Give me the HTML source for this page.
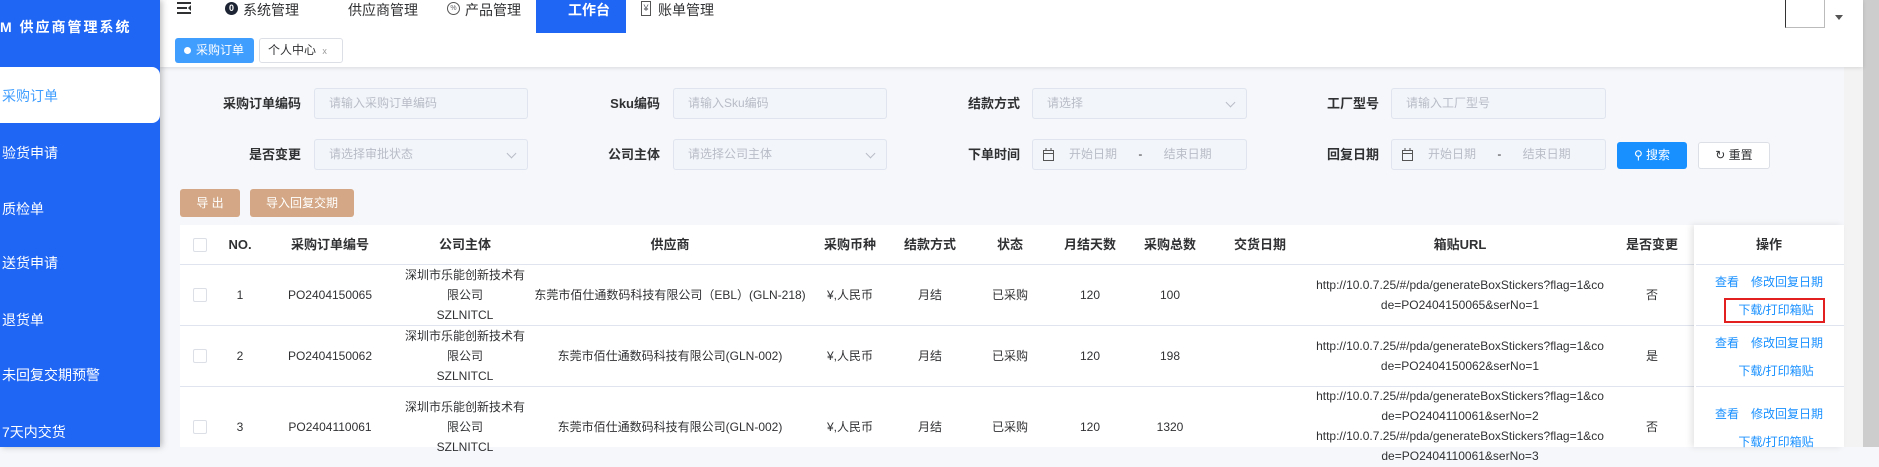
<!DOCTYPE html>
<html><head><meta charset="utf-8">
<style>
*{margin:0;padding:0;box-sizing:border-box}
body{width:1879px;height:447px;overflow:hidden;position:relative;background:#f5f7fa;font-family:"Liberation Sans","Noto Sans CJK SC",sans-serif;font-size:12px;color:#606266}
.a{position:absolute}
.side{left:0;top:0;width:160px;height:447px;background:#1f66f5;color:#fff;box-shadow:2px 0 6px rgba(0,0,0,.25);z-index:3}
.side .it{position:absolute;left:2px;font-size:14px;color:#fff}
.hdr{left:160px;top:0;width:1703px;height:67px;background:#fff;box-shadow:0 1px 4px rgba(0,0,0,.12);z-index:2}
.nav{position:absolute;top:0;height:33px;line-height:20px;font-size:14px;color:#303133;padding-top:0}
.lbl{position:absolute;font-size:13px;font-weight:bold;color:#303133;text-align:right;width:120px;line-height:31px}
.inp{position:absolute;height:31px;background:#f2f5fa;border:1px solid #dfe4ee;border-radius:3px;color:#b8bcc6;font-size:12px;line-height:29px;padding-left:14px}
.chev{position:absolute;right:12px;top:10px;width:7px;height:7px;border-right:1px solid #b8bcc6;border-bottom:1px solid #b8bcc6;transform:rotate(45deg)}
.tbl{left:180px;top:225px;width:1664px;height:222px;background:#fff}
.c{position:absolute;display:flex;align-items:center;justify-content:center;text-align:center;line-height:20px;color:#303133;font-size:12px}
.h{font-weight:bold;font-size:13px;color:#303133}
.ln{position:absolute;left:180px;width:1664px;height:1px;background:#dfe4ee}
.cb{position:absolute;left:193px;width:14px;height:14px;border:1px solid #dcdfe6;border-radius:2px;background:#fff}
.lk{color:#1890ff}
</style></head><body>

<div class="a side">
  <div class="a" style="left:0;top:17px;font-size:14px;font-weight:bold;letter-spacing:2px;white-space:nowrap">M 供应商管理系统</div>
  <div class="a" style="left:0;top:67px;width:160px;height:56px;background:#fff;border-radius:0 8px 8px 0"></div>
  <div class="it" style="top:86px;color:#409eff">采购订单</div>
  <div class="it" style="top:143px">验货申请</div>
  <div class="it" style="top:199px">质检单</div>
  <div class="it" style="top:253px">送货申请</div>
  <div class="it" style="top:310px">退货单</div>
  <div class="it" style="top:365px">未回复交期预警</div>
  <div class="it" style="top:422px">7天内交货</div>
</div>

<div class="a hdr">
  <svg class="a" style="left:17px;top:2px" width="14" height="12"><path d="M0 1H14M0 6H10M0 11H14" stroke="#303133" stroke-width="2"/><path d="M14 3L11 6L14 9Z" fill="#303133"/></svg>
  <div class="a" style="left:65px;top:2px;width:13px;height:13px;border-radius:50%;background:#1d2433;color:#fff;font-size:9px;text-align:center;line-height:13px;font-weight:bold">0</div>
  <div class="nav" style="left:83px">系统管理</div>
  <div class="nav" style="left:188px">供应商管理</div>
  <div class="a" style="left:287px;top:2px;width:13px;height:13px;border-radius:50%;border:1px solid #555;font-size:7px;text-align:center;line-height:11px">%</div>
  <div class="nav" style="left:305px">产品管理</div>
  <div class="a" style="left:376px;top:0;width:90px;height:33px;background:#1f66f5"></div>
  <div class="nav" style="left:408px;color:#fff;font-weight:bold">工作台</div>
  <div class="a" style="left:481px;top:1px;width:10px;height:15px;border:1px solid #555;font-size:9px;text-align:center;line-height:13px">¥</div>
  <div class="nav" style="left:498px">账单管理</div>
  <div class="a" style="left:15px;top:38px;width:79px;height:25px;background:#409eff;border-radius:3px;color:#fff;font-size:12px;line-height:25px;padding-left:21px">采购订单</div>
  <div class="a" style="left:24px;top:47px;width:7px;height:7px;border-radius:50%;background:#fff"></div>
  <div class="a" style="left:99px;top:38px;width:84px;height:25px;border:1px solid #dcdfe6;border-radius:3px;font-size:12px;line-height:23px;padding-left:8px;color:#303133">个人中心 <span style="font-size:9px;color:#999;margin-left:3px">x</span></div>
  <div class="a" style="left:1625px;top:0;width:40px;height:28px;border-left:1px solid #333;border-right:1px solid #bbb;border-bottom:1px solid #bbb"></div>
  <div class="a" style="left:1675px;top:15px;width:0;height:0;border-left:4px solid transparent;border-right:4px solid transparent;border-top:5px solid #555"></div>
</div>
<div class="a" style="left:1844px;top:67px;width:19px;height:380px;background:#f3f3f3"></div>
<div class="a" style="left:1863px;top:0;width:16px;height:447px;background:#cdcdcd"></div>

<!-- form -->
<div class="lbl" style="left:181px;top:88px">采购订单编码</div>
<div class="inp" style="left:314px;top:88px;width:214px">请输入采购订单编码</div>
<div class="lbl" style="left:540px;top:88px">Sku编码</div>
<div class="inp" style="left:673px;top:88px;width:214px">请输入Sku编码</div>
<div class="lbl" style="left:900px;top:88px">结款方式</div>
<div class="inp" style="left:1032px;top:88px;width:215px">请选择<span class="chev"></span></div>
<div class="lbl" style="left:1259px;top:88px">工厂型号</div>
<div class="inp" style="left:1391px;top:88px;width:215px">请输入工厂型号</div>

<div class="lbl" style="left:181px;top:139px">是否变更</div>
<div class="inp" style="left:314px;top:139px;width:214px">请选择审批状态<span class="chev"></span></div>
<div class="lbl" style="left:540px;top:139px">公司主体</div>
<div class="inp" style="left:673px;top:139px;width:214px">请选择公司主体<span class="chev"></span></div>
<div class="lbl" style="left:900px;top:139px">下单时间</div>
<div class="inp" style="left:1032px;top:139px;width:215px;padding-left:36px">开始日期 <span style="margin:0 18px;color:#333">-</span> 结束日期</div>
<div class="lbl" style="left:1259px;top:139px">回复日期</div>
<div class="inp" style="left:1391px;top:139px;width:215px;padding-left:36px">开始日期 <span style="margin:0 18px;color:#333">-</span> 结束日期</div>
<svg class="a" style="left:1043px;top:148px" width="11" height="13"><rect x="0.5" y="2.5" width="10" height="10" fill="none" stroke="#555"/><path d="M0 5.5H11M3 0V3M8 0V3" stroke="#555"/></svg>
<svg class="a" style="left:1402px;top:148px" width="11" height="13"><rect x="0.5" y="2.5" width="10" height="10" fill="none" stroke="#555"/><path d="M0 5.5H11M3 0V3M8 0V3" stroke="#555"/></svg>
<div class="a" style="left:1617px;top:142px;width:70px;height:27px;background:#1890ff;border-radius:3px;color:#fff;font-size:12px;line-height:27px;text-align:center">⚲ 搜索</div>
<div class="a" style="left:1698px;top:142px;width:72px;height:27px;background:#fff;border:1px solid #dcdfe6;border-radius:3px;color:#303133;font-size:12px;line-height:25px;text-align:center">↻ 重置</div>

<div class="a" style="left:180px;top:189px;width:60px;height:28px;background:#d4a886;border-radius:3px;color:#fff;line-height:28px;text-align:center">导 出</div>
<div class="a" style="left:250px;top:189px;width:104px;height:28px;background:#d4a886;border-radius:3px;color:#fff;line-height:28px;text-align:center">导入回复交期</div>

<!-- table -->
<div class="a tbl"></div>
<div class="ln" style="top:264px"></div>
<div class="ln" style="top:325px"></div>
<div class="ln" style="top:386px"></div>
<div class="a" style="left:1694px;top:225px;width:150px;height:222px;background:#fff;box-shadow:-3px 0 6px rgba(0,0,0,.1)"></div>
<div class="a" style="left:1696px;top:264px;width:148px;height:1px;background:#dfe4ee"></div>
<div class="a" style="left:1696px;top:325px;width:148px;height:1px;background:#dfe4ee"></div>
<div class="a" style="left:1696px;top:386px;width:148px;height:1px;background:#dfe4ee"></div>

<div class="cb" style="top:238px"></div>
<div class="cb" style="top:288px"></div>
<div class="cb" style="top:349px"></div>
<div class="cb" style="top:420px"></div>

<!-- header -->
<div class="c h" style="left:220px;top:225px;width:40px;height:39px">NO.</div>
<div class="c h" style="left:260px;top:225px;width:140px;height:39px">采购订单编号</div>
<div class="c h" style="left:400px;top:225px;width:130px;height:39px">公司主体</div>
<div class="c h" style="left:530px;top:225px;width:280px;height:39px">供应商</div>
<div class="c h" style="left:810px;top:225px;width:80px;height:39px">采购币种</div>
<div class="c h" style="left:890px;top:225px;width:80px;height:39px">结款方式</div>
<div class="c h" style="left:970px;top:225px;width:80px;height:39px">状态</div>
<div class="c h" style="left:1050px;top:225px;width:80px;height:39px">月结天数</div>
<div class="c h" style="left:1130px;top:225px;width:80px;height:39px">采购总数</div>
<div class="c h" style="left:1210px;top:225px;width:100px;height:39px">交货日期</div>
<div class="c h" style="left:1310px;top:225px;width:300px;height:39px">箱贴URL</div>
<div class="c h" style="left:1610px;top:225px;width:84px;height:39px">是否变更</div>
<div class="c h" style="left:1694px;top:225px;width:150px;height:39px">操作</div>

<!-- row1 -->
<div class="c" style="left:220px;top:265px;width:40px;height:60px">1</div>
<div class="c" style="left:260px;top:265px;width:140px;height:60px">PO2404150065</div>
<div class="c" style="left:400px;top:265px;width:130px;height:60px">深圳市乐能创新技术有<br>限公司<br>SZLNITCL</div>
<div class="c" style="left:530px;top:265px;width:280px;height:60px">东莞市佰仕通数码科技有限公司（EBL）(GLN-218)</div>
<div class="c" style="left:810px;top:265px;width:80px;height:60px">¥,人民币</div>
<div class="c" style="left:890px;top:265px;width:80px;height:60px">月结</div>
<div class="c" style="left:970px;top:265px;width:80px;height:60px">已采购</div>
<div class="c" style="left:1050px;top:265px;width:80px;height:60px">120</div>
<div class="c" style="left:1130px;top:265px;width:80px;height:60px">100</div>
<div class="c" style="left:1310px;top:265px;width:300px;height:60px">http://10.0.7.25/#/pda/generateBoxStickers?flag=1&amp;co<br>de=PO2404150065&amp;serNo=1</div>
<div class="c" style="left:1610px;top:265px;width:84px;height:60px">否</div>
<div class="c lk" style="left:1694px;top:272px;width:150px;height:20px"><span>查看</span><span style="margin-left:12px">修改回复日期</span></div>
<div class="a" style="left:1724px;top:298px;width:101px;height:25px;border:2px solid #e32020"></div>
<div class="c lk" style="left:1694px;top:300px;width:164px;height:20px">下载/打印箱贴</div>

<!-- row2 -->
<div class="c" style="left:220px;top:326px;width:40px;height:60px">2</div>
<div class="c" style="left:260px;top:326px;width:140px;height:60px">PO2404150062</div>
<div class="c" style="left:400px;top:326px;width:130px;height:60px">深圳市乐能创新技术有<br>限公司<br>SZLNITCL</div>
<div class="c" style="left:530px;top:326px;width:280px;height:60px">东莞市佰仕通数码科技有限公司(GLN-002)</div>
<div class="c" style="left:810px;top:326px;width:80px;height:60px">¥,人民币</div>
<div class="c" style="left:890px;top:326px;width:80px;height:60px">月结</div>
<div class="c" style="left:970px;top:326px;width:80px;height:60px">已采购</div>
<div class="c" style="left:1050px;top:326px;width:80px;height:60px">120</div>
<div class="c" style="left:1130px;top:326px;width:80px;height:60px">198</div>
<div class="c" style="left:1310px;top:326px;width:300px;height:60px">http://10.0.7.25/#/pda/generateBoxStickers?flag=1&amp;co<br>de=PO2404150062&amp;serNo=1</div>
<div class="c" style="left:1610px;top:326px;width:84px;height:60px">是</div>
<div class="c lk" style="left:1694px;top:333px;width:150px;height:20px"><span>查看</span><span style="margin-left:12px">修改回复日期</span></div>
<div class="c lk" style="left:1694px;top:361px;width:164px;height:20px">下载/打印箱贴</div>

<!-- row3 -->
<div class="c" style="left:220px;top:387px;width:40px;height:80px">3</div>
<div class="c" style="left:260px;top:387px;width:140px;height:80px">PO2404110061</div>
<div class="c" style="left:400px;top:387px;width:130px;height:80px">深圳市乐能创新技术有<br>限公司<br>SZLNITCL</div>
<div class="c" style="left:530px;top:387px;width:280px;height:80px">东莞市佰仕通数码科技有限公司(GLN-002)</div>
<div class="c" style="left:810px;top:387px;width:80px;height:80px">¥,人民币</div>
<div class="c" style="left:890px;top:387px;width:80px;height:80px">月结</div>
<div class="c" style="left:970px;top:387px;width:80px;height:80px">已采购</div>
<div class="c" style="left:1050px;top:387px;width:80px;height:80px">120</div>
<div class="c" style="left:1130px;top:387px;width:80px;height:80px">1320</div>
<div class="c" style="left:1310px;top:386px;width:300px;height:80px">http://10.0.7.25/#/pda/generateBoxStickers?flag=1&amp;co<br>de=PO2404110061&amp;serNo=2<br>http://10.0.7.25/#/pda/generateBoxStickers?flag=1&amp;co<br>de=PO2404110061&amp;serNo=3</div>
<div class="c" style="left:1610px;top:387px;width:84px;height:80px">否</div>
<div class="c lk" style="left:1694px;top:404px;width:150px;height:20px"><span>查看</span><span style="margin-left:12px">修改回复日期</span></div>
<div class="c lk" style="left:1694px;top:432px;width:164px;height:20px">下载/打印箱贴</div>

</body></html>
